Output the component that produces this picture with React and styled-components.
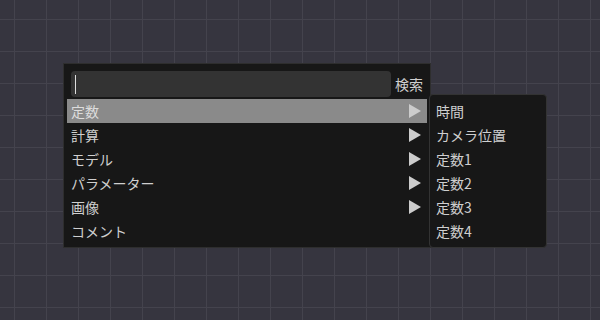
import React from "react";
import styled, { createGlobalStyle } from "styled-components";

const Global = createGlobalStyle`
  html, body { margin: 0; padding: 0; }
  body {
    width: 600px;
    height: 320px;
    overflow: hidden;
    background-color: #36353f;
    background-image:
      linear-gradient(to right, #44434d 1px, transparent 1px),
      linear-gradient(to bottom, #44434d 1px, transparent 1px);
    background-size: 32px 32px;
    background-position: 14px 19px;
    font-family: "Noto Sans CJK JP", "Noto Sans", sans-serif;
  }
`;

const Stage = styled.div`
  padding: 63px 0 0 63px;
`;

const Anchor = styled.div`
  position: relative;
  width: 368px;
`;

const Panel = styled.div`
  box-sizing: border-box;
  width: 368px;
  height: 185px;
  background: #171717;
  border: 1px solid #2e2e2e;
  padding: 7px 3px 4px 3px;
  display: flex;
  flex-direction: column;
`;

const SearchRow = styled.div`
  display: flex;
  align-items: center;
  gap: 4px;
  padding: 0 4px;
  height: 26px;
  margin-bottom: 2px;
`;

const SearchBox = styled.div`
  box-sizing: border-box;
  flex: 0 0 320px;
  height: 26px;
  background: #333333;
  border-radius: 4px;
  display: flex;
  align-items: center;
  padding-left: 4px;
`;

const Caret = styled.div`
  width: 1px;
  height: 19px;
  background: #dddddd;
`;

const SearchLabel = styled.span`
  color: #cfcfcf;
  font-size: 14px;
  line-height: 26px;
  white-space: nowrap;
`;

const Row = styled.div`
  height: 24px;
  display: flex;
  align-items: center;
  justify-content: space-between;
  padding: 0 6px 0 4px;
  background: ${(p) => (p.$active ? "#8a8a8a" : "transparent")};
  color: ${(p) => (p.$active ? "#dcdcdc" : "#cfcfcf")};
  font-size: 14px;
  white-space: nowrap;
`;

const Arrow = styled.svg`
  width: 12px;
  height: 14px;
  display: block;
`;

const SubMenu = styled.div`
  position: absolute;
  left: 366px;
  top: 31px;
  box-sizing: border-box;
  width: 118px;
  height: 154px;
  background: #171717;
  border: 1px solid #333333;
  border-radius: 4px;
  padding: 4px 0 0 6px;
  display: flex;
  flex-direction: column;
`;

const SubItem = styled.div`
  height: 24px;
  display: flex;
  align-items: center;
  color: #cfcfcf;
  font-size: 14px;
  white-space: nowrap;
`;

const items = [
  { label: "定数", sub: true, active: true },
  { label: "計算", sub: true },
  { label: "モデル", sub: true },
  { label: "パラメーター", sub: true },
  { label: "画像", sub: true },
  { label: "コメント", sub: false },
];

const subItems = ["時間", "カメラ位置", "定数1", "定数2", "定数3", "定数4"];

export default function App() {
  return (
    <>
      <Global />
      <Stage>
        <Anchor>
          <Panel>
            <SearchRow>
              <SearchBox>
                <Caret />
              </SearchBox>
              <SearchLabel>検索</SearchLabel>
            </SearchRow>
            {items.map((it) => (
              <Row key={it.label} $active={it.active}>
                <span>{it.label}</span>
                {it.sub && (
                  <Arrow viewBox="0 0 12 14">
                    <polygon points="0,0 12,7 0,14" fill="#cccccc" />
                  </Arrow>
                )}
              </Row>
            ))}
          </Panel>
          <SubMenu>
            {subItems.map((s) => (
              <SubItem key={s}>{s}</SubItem>
            ))}
          </SubMenu>
        </Anchor>
      </Stage>
    </>
  );
}
